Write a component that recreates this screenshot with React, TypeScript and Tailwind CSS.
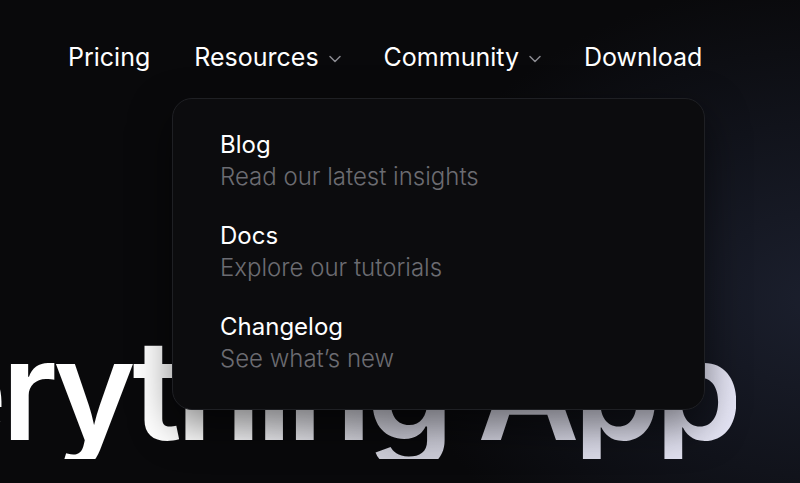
import { ChevronDown } from "lucide-react";

const NAV = [
  { label: "Pricing" },
  { label: "Resources", menu: true },
  { label: "Community", menu: true },
  { label: "Download" },
];

const ITEMS = [
  { title: "Blog", sub: "Read our latest insights" },
  { title: "Docs", sub: "Explore our tutorials" },
  { title: "Changelog", sub: "See what\u2019s new" },
];

export default function App() {
  return (
    <div
      className="relative w-[800px] h-[483px] overflow-hidden bg-[#09090b] bg-[radial-gradient(ellipse_420px_320px_at_820px_300px,#1b1f2d_0%,#11131b_55%,#09090b_100%)]"
      style={{ fontFamily: "Inter, 'Noto Sans', sans-serif" }}
    >
      {/* Nav */}
      <nav className="flex items-center h-[114px] pt-[2px] pl-[68px] gap-[44px] text-[25px] text-white">
        {NAV.map(({ label, menu }) => (
          <div key={label} className="flex items-center gap-[6px]">
            <span>{label}</span>
            {menu && <ChevronDown size={20} strokeWidth={1.8} className="text-[#8a8a90] mt-[2px] -mr-[5px]" />}
          </div>
        ))}
      </nav>

      {/* Hero heading */}
      <div className="absolute left-[-228px] top-[319px] whitespace-nowrap">
        <h1 className="text-[140px] leading-none font-semibold tracking-[-0.042em] bg-[linear-gradient(90deg,#ffffff_0%,#ffffff_45%,#c9c9d4_65%,#e6e6f6_100%)] bg-clip-text text-transparent">
          Everything App
        </h1>
      </div>

      {/* Dropdown */}
      <div className="absolute left-[172px] top-[98px] w-[533px] h-[312px] rounded-[20px] bg-[#0c0c0e] border border-[#1f2024] shadow-[0_16px_40px_rgba(0,0,0,0.5)] pl-[47px] pt-[30px] flex flex-col gap-[27px]">
        {ITEMS.map(({ title, sub }) => (
          <div key={title} className="flex flex-col">
            <span className="text-2xl leading-[32px] text-white">{title}</span>
            <span className="text-2xl leading-[32px] font-light text-[#6c6c72]">{sub}</span>
          </div>
        ))}
      </div>
    </div>
  );
}
